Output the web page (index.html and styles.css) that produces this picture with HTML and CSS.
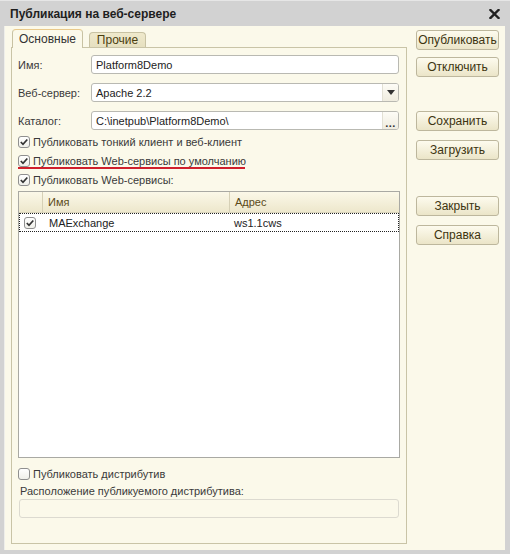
FILE: index.html
```html
<!DOCTYPE html>
<html lang="ru">
<head>
<meta charset="utf-8">
<title>Публикация на веб-сервере</title>
<link rel="stylesheet" href="styles.css">
</head>
<body>
<div class="window">
  <div class="titlebar">
    <span class="title">Публикация на веб-сервере</span>
    <svg class="close" width="11" height="10" viewBox="0 0 11 10"><path d="M1.5 1 L9.5 9 M9.5 1 L1.5 9" stroke="#222" stroke-width="2.4" stroke-linecap="square"/></svg>
  </div>
  <div class="client">
    <div class="left">
      <div class="tabs">
        <div class="tab active">Основные</div>
        <div class="tab">Прочие</div>
      </div>
      <div class="panel">
        <div class="field">
          <span class="label">Имя:</span>
          <div class="input">Platform8Demo</div>
        </div>
        <div class="field">
          <span class="label">Веб-сервер:</span>
          <div class="input combo">
            <span class="value">Apache 2.2</span>
            <span class="btn-drop"><svg width="8" height="5" viewBox="0 0 8 5"><path d="M0 0 H8 L4 5 Z" fill="#333"/></svg></span>
          </div>
        </div>
        <div class="field">
          <span class="label">Каталог:</span>
          <div class="input combo">
            <span class="value">C:\inetpub\Platform8Demo\</span>
            <span class="btn-dots">...</span>
          </div>
        </div>

        <div class="check-row first">
          <span class="cb checked"><svg width="10" height="10" viewBox="0 0 10 10"><path d="M1.8 5 L4 7.3 L8.3 2.5" fill="none" stroke="#333" stroke-width="1.7"/></svg></span>
          <span>Публиковать тонкий клиент и веб-клиент</span>
        </div>
        <div class="check-row marked">
          <span class="cb checked"><svg width="10" height="10" viewBox="0 0 10 10"><path d="M1.8 5 L4 7.3 L8.3 2.5" fill="none" stroke="#333" stroke-width="1.7"/></svg></span>
          <span>Публиковать Web-сервисы по умолчанию</span>
        </div>
        <div class="check-row">
          <span class="cb checked"><svg width="10" height="10" viewBox="0 0 10 10"><path d="M1.8 5 L4 7.3 L8.3 2.5" fill="none" stroke="#333" stroke-width="1.7"/></svg></span>
          <span>Публиковать Web-сервисы:</span>
        </div>

        <div class="table">
          <div class="thead">
            <div class="th c0"></div>
            <div class="th c1">Имя</div>
            <div class="th c2">Адрес</div>
          </div>
          <div class="row focused">
            <div class="td c0"><span class="cb checked"><svg width="10" height="10" viewBox="0 0 10 10"><path d="M1.8 5 L4 7.3 L8.3 2.5" fill="none" stroke="#333" stroke-width="1.7"/></svg></span></div>
            <div class="td c1">MAExchange</div>
            <div class="td c2">ws1.1cws</div>
          </div>
        </div>

        <div class="check-row dist">
          <span class="cb"></span>
          <span>Публиковать дистрибутив</span>
        </div>
        <div class="caption">Расположение публикуемого дистрибутива:</div>
        <div class="input disabled"></div>
      </div>
    </div>
    <div class="buttons">
      <div class="group g1">
        <div class="button">Опубликовать</div>
        <div class="button">Отключить</div>
      </div>
      <div class="group g2">
        <div class="button">Сохранить</div>
        <div class="button">Загрузить</div>
      </div>
      <div class="group g3">
        <div class="button">Закрыть</div>
        <div class="button">Справка</div>
      </div>
    </div>
  </div>
</div>
</body>
</html>
```
FILE: styles.css
```css
* { box-sizing: border-box; }
html, body { margin: 0; padding: 0; }
body {
  width: 510px;
  height: 554px;
  overflow: hidden;
  font-family: "Liberation Sans", Arial, sans-serif;
  font-size: 11px;
  color: #333;
  background: #cfcfcf;
}
.window {
  width: 510px;
  height: 554px;
  background: #d2d2d2;
  border-top: 1px solid #e6e6e6;
  padding: 0 5px 4px 4px;
  display: flex;
  flex-direction: column;
}
.titlebar {
  height: 25px;
  display: flex;
  align-items: center;
  justify-content: space-between;
  padding: 0 5px 0 6px;
}
.title {
  font-weight: bold;
  color: #1e1e1e;
  font-size: 12px;
}
.close { display: block; margin-top: 1px; }
.client {
  flex: 1;
  background: #fbf9ea;
  border-left: 1px solid #eeeeea;
  display: flex;
  padding: 3px 0 6px 6px;
}
.left {
  width: 396px;
  display: flex;
  flex-direction: column;
}
.tabs {
  display: flex;
  align-items: flex-end;
  gap: 6px;
  padding-left: 1px;
  height: 18px;
  position: relative;
  z-index: 1;
}
.tab {
  height: 15px;
  padding: 0 8px;
  border: 1px solid #c8c2a3;
  border-bottom: none;
  border-radius: 4px 4px 0 0;
  background: linear-gradient(#efe9cc, #e6e0c0);
  color: #4a3e10;
  font-size: 12px;
  display: flex;
  align-items: center;
  justify-content: center;
  width: 57px;
}
.tab.active {
  height: 19px;
  width: 71px;
  margin-bottom: -1px;
  background: #fbf9ea;
  border-top: 1px solid #e9c98a;
  color: #333;
}
.panel {
  flex: 1;
  border: 1px solid #c9c4a7;
  padding: 7px 7px 0 6px;
  display: flex;
  flex-direction: column;
}
.field {
  display: flex;
  align-items: center;
  height: 19px;
  margin-bottom: 9px;
}
.label {
  width: 73px;
  color: #3a3a3a;
}
.input {
  flex: 1;
  height: 19px;
  background: #fff;
  border: 1px solid #b9b9b2;
  border-radius: 3px;
  padding-left: 4px;
  display: flex;
  align-items: center;
  color: #222;
}
.combo { padding-right: 0; }
.combo .value { flex: 1; }
.btn-drop, .btn-dots {
  width: 16px;
  height: 17px;
  border-left: 1px solid #e2e0d4;
  display: flex;
  align-items: center;
  justify-content: center;
  background: linear-gradient(#fdfcf6, #efecdf);
  border-radius: 0 2px 2px 0;
}
.btn-drop svg { display: block; margin-left: 1px; }
.btn-dots {
  align-items: flex-end;
  font-weight: bold;
  font-size: 11px;
  line-height: 12px;
  letter-spacing: 0.5px;
  color: #333;
}
.check-row {
  display: flex;
  align-items: center;
  height: 19px;
  color: #3a3a3a;
  gap: 3px;
}
.check-row.first { margin-top: -7px; }
.check-row.marked { position: relative; }
.check-row.marked::after {
  content: "";
  position: absolute;
  left: 0;
  top: 16px;
  width: 227px;
  height: 2px;
  background: #cf1f2c;
}
.cb {
  width: 12px;
  height: 12px;
  border: 1px solid #8f8f8f;
  border-radius: 3px;
  background: linear-gradient(#ffffff, #f0f0ea);
  display: flex;
  align-items: center;
  justify-content: center;
  flex: none;
}
.cb svg { display: block; }
.table {
  margin-top: 2px;
  height: 267px;
  margin-right: -1px;
  border: 1px solid #a9a9a3;
  background: #fff;
  display: flex;
  flex-direction: column;
}
.thead {
  display: flex;
  height: 21px;
  background: linear-gradient(#fbf8e8, #ede7cc);
  border-bottom: 1px solid #d8d3bb;
}
.th {
  display: flex;
  align-items: center;
  color: #5a4a18;
  padding-left: 5px;
  border-right: 1px solid #d6d0b6;
}
.th.c2 { border-right: none; }
.c0 { width: 24px; flex: none; }
.c1 { width: 187px; flex: none; }
.c2 { flex: 1; }
.row {
  display: flex;
  height: 19px;
  border: 1px dotted #222;
}
.td {
  display: flex;
  align-items: center;
  color: #222;
  padding-left: 5px;
}
.row .c0 { width: 23px; padding-left: 4px; }
.row .c1 { padding-left: 6px; }
.row .c2 { padding-left: 4px; }
.check-row.dist { margin-top: 6px; }
.caption {
  height: 16px;
  display: flex;
  align-items: center;
  color: #3a3a3a;
  padding-left: 2px;
}
.input.disabled {
  flex: none;
  margin-top: 0;
  margin-left: 1px;
  height: 19px;
  background: #fbf9ea;
  border-color: #dcdad0;
}
.buttons {
  width: 83px;
  margin-left: 9px;
  display: flex;
  flex-direction: column;
}
.group {
  display: flex;
  flex-direction: column;
  gap: 9px;
}
.g1 { margin-top: 1px; gap: 7px; }
.g2 { margin-top: 34px; }
.g3 { margin-top: 36px; }
.button {
  height: 20px;
  border: 1px solid #bdb79d;
  border-radius: 3px;
  background: linear-gradient(#fdfbee, #ebe5c8);
  display: flex;
  align-items: center;
  justify-content: center;
  color: #3d3410;
  font-size: 12px;
}
```
